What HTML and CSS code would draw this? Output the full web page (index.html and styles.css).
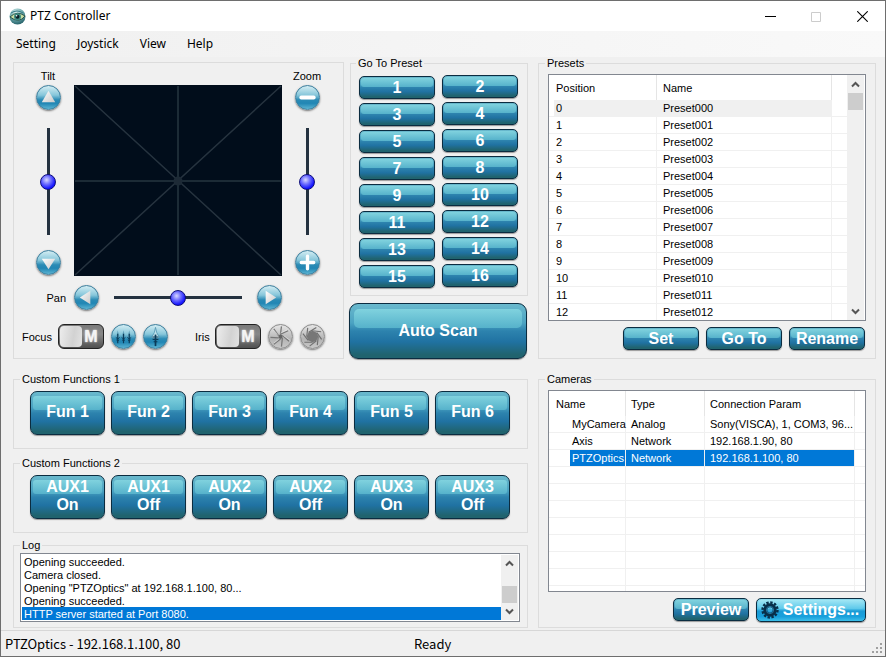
FILE: index.html
```html
<!DOCTYPE html>
<html lang="en">
<head>
<meta charset="utf-8">
<title>PTZ Controller</title>
<link rel="stylesheet" href="styles.css">
</head>
<body>
<header class="titlebar">
  <svg class="app-icon" viewBox="0 0 17 17" aria-hidden="true">
    <defs>
      <radialGradient id="globe" cx="40%" cy="25%" r="80%"><stop offset="0" stop-color="#d8f0ee"/><stop offset=".5" stop-color="#6ba9ac"/><stop offset="1" stop-color="#1f5a63"/></radialGradient>
    </defs>
    <circle cx="8.500" cy="8.500" r="8" fill="url(#globe)"/>
    <path d="M1 9Q8 2 16 8Q10 16 1 9Z" fill="#c9dfa4" stroke="#2b5148" stroke-width="1"/>
    <circle cx="8.500" cy="8.700" r="3.500" fill="#3c8b83"/>
    <circle cx="8.500" cy="8.700" r="2" fill="#0b1f25"/>
    <circle cx="7.600" cy="7.700" r=".8" fill="#fff"/>
    <path d="M2 5Q8 1 14 5" fill="none" stroke="#357a85" stroke-width="1"/>
  </svg>
  <h1 class="app-title">PTZ Controller</h1>
  <div class="window-controls">
    <button type="button" aria-label="Minimize"><svg viewBox="0 0 11 11"><path d="M0 5.500H11" stroke="#000"/></svg></button>
    <button type="button" aria-label="Maximize"><svg viewBox="0 0 11 11"><path d="M.5 1.500H9.500V10.500H.5Z" fill="none" stroke="#ccc"/></svg></button>
    <button type="button" aria-label="Close"><svg viewBox="0 0 11 11"><path d="M.3.3L10.700 10.700M10.700.3L.3 10.700" stroke="#000" stroke-width="1.100"/></svg></button>
  </div>
</header>
<nav class="menubar">
  <button type="button">Setting</button>
  <button type="button">Joystick</button>
  <button type="button">View</button>
  <button type="button">Help</button>
</nav>

<main class="workspace">
  <div class="left">
    <div class="top-row">
      <section class="ptz" aria-label="Camera movement">
        <div class="ptz-grid">
          <div class="axis">
            <label for="tilt">Tilt</label>
            <button type="button" class="round" aria-label="Tilt up"><svg viewBox="0 0 24 24"><path d="M12 5L19 17H5Z" fill="url(#metal)"/></svg></button>
            <input id="tilt" class="vertical" type="range" min="0" max="100" value="50">
            <button type="button" class="round" aria-label="Tilt down"><svg viewBox="0 0 24 24"><path d="M12 19L5 8H19Z" fill="url(#metal)"/></svg></button>
          </div>
          <svg class="pad" viewBox="0 0 208 191" preserveAspectRatio="none" role="img" aria-label="Pan and tilt pad">
            <defs>
              <linearGradient id="metal" x1="0" y1="0" x2="1" y2="1"><stop offset="0" stop-color="#fff"/><stop offset="1" stop-color="#c9c9c9"/></linearGradient>
            </defs>
            <rect width="208" height="191" fill="#010d1b"/>
            <g stroke="#26333f" stroke-width="1.500">
              <path d="M1 1L207 190M207 1L1 190"/>
              <path d="M104 1V190M1 96H207" stroke="#1c2b36" stroke-width="2"/>
            </g>
            <circle cx="104" cy="96" r="4.500" fill="#1d2a36"/>
          </svg>
          <div class="axis">
            <label for="zoom">Zoom</label>
            <button type="button" class="round" aria-label="Zoom out"><svg viewBox="0 0 24 24"><path d="M5.500 12H18.500" stroke="#fff" stroke-width="4" stroke-linecap="round"/></svg></button>
            <input id="zoom" class="vertical" type="range" min="0" max="100" value="50">
            <button type="button" class="round" aria-label="Zoom in"><svg viewBox="0 0 24 24"><path d="M5.500 12H18.500M12 5.500V18.500" stroke="#fff" stroke-width="3.500" stroke-linecap="round"/></svg></button>
          </div>
          <label class="pan-label" for="pan">Pan</label>
          <div class="pan">
            <button type="button" class="round" aria-label="Pan left"><svg viewBox="0 0 24 24"><path d="M5 12L16 5V19Z" fill="url(#metal)"/></svg></button>
            <input id="pan" type="range" min="0" max="100" value="50">
            <button type="button" class="round" aria-label="Pan right"><svg viewBox="0 0 24 24"><path d="M19 12L8 5V19Z" fill="url(#metal)"/></svg></button>
          </div>
        </div>
        <div class="lens">
          <div class="lens-group focus">
            <label for="focus-mode">Focus</label>
            <button type="button" id="focus-mode" class="toggle">M</button>
            <button type="button" class="round" aria-label="Focus far"><svg viewBox="0 0 24 24"><path d="M6 5.500L7.500 12H4.500ZM12 5.500L13.500 12H10.500ZM18 5.500L19.500 12H16.500Z" fill="#5f9fba"/><path d="M6 9V19M12 9V19M18 9V19" stroke="#0b3b58" stroke-width="1.200"/><path d="M4 13L6 14.500L8 13M10 13L12 14.500L14 13M16 13L18 14.500L20 13M4.500 15.500L6 16.500L7.500 15.500M10.500 15.500L12 16.500L13.500 15.500M16.500 15.500L18 16.500L19.500 15.500" fill="none" stroke="#0b3b58"/></svg></button>
            <button type="button" class="round" aria-label="Focus near"><svg viewBox="0 0 24 24"><path d="M12 2.500Q12.500 8 16 13L12 14.500L8 13Q11.500 8 12 2.500Z" fill="#bfe2ec" stroke="#4f93af" stroke-width=".8"/><path d="M12 10V22" stroke="#0b3b58" stroke-width="1.800"/><path d="M9 12.500H15M9 15H15M10 17.500H14" stroke="#0b3b58" stroke-width="1.200" fill="none"/></svg></button>
          </div>
          <div class="lens-group iris">
            <label for="iris-mode">Iris</label>
            <button type="button" id="iris-mode" class="toggle">M</button>
            <button type="button" class="round gray" aria-label="Close iris"><svg viewBox="0 0 24 24"><path d="M12 9.500L14 11L14 13.500L12 14.500L10 13.500L10 11Z" fill="#666"/><path d="M12 9.500L20 6M14 11L21 17M14 13.500L13 22.500M12 14.500L5 20M10 13.500L1.500 13M10 11L5 4M12 9.500L13 1.500" stroke="#777" stroke-width="1.300"/><path d="M12 8.500L19 5M15 11L22 16M10 15L5 19M9 10L4.500 5" stroke="#eee" stroke-width=".6"/></svg></button>
            <button type="button" class="round gray" aria-label="Open iris"><svg viewBox="0 0 24 24"><path d="M12 6L16.500 8L18 12L16 16.500L12 18L7.500 16L6 12L8 7.500Z" fill="#777"/><path d="M8 7.500L16 2.500M12 6L21 7M16.500 8L21.500 15M18 12L17 21M16 16.500L9 22M12 18L3.500 18M7.500 16L2 9M6 12L7 3" stroke="#707070" stroke-width="1.200"/></svg></button>
          </div>
        </div>
      </section>

      <div class="preset-column">
        <fieldset class="goto">
          <legend>Go To Preset</legend>
          <div class="goto-columns">
            <div class="goto-stack odd">
              <button type="button" class="glossy">1</button>
              <button type="button" class="glossy">3</button>
              <button type="button" class="glossy">5</button>
              <button type="button" class="glossy">7</button>
              <button type="button" class="glossy">9</button>
              <button type="button" class="glossy">11</button>
              <button type="button" class="glossy">13</button>
              <button type="button" class="glossy">15</button>
            </div>
            <div class="goto-stack">
              <button type="button" class="glossy">2</button>
              <button type="button" class="glossy">4</button>
              <button type="button" class="glossy">6</button>
              <button type="button" class="glossy">8</button>
              <button type="button" class="glossy">10</button>
              <button type="button" class="glossy">12</button>
              <button type="button" class="glossy">14</button>
              <button type="button" class="glossy">16</button>
            </div>
          </div>
        </fieldset>
        <button type="button" class="glossy scan">Auto Scan</button>
      </div>
    </div>

    <fieldset class="functions">
      <legend>Custom Functions 1</legend>
      <div class="function-row">
        <button type="button" class="glossy large">Fun 1</button>
        <button type="button" class="glossy large">Fun 2</button>
        <button type="button" class="glossy large">Fun 3</button>
        <button type="button" class="glossy large">Fun 4</button>
        <button type="button" class="glossy large">Fun 5</button>
        <button type="button" class="glossy large">Fun 6</button>
      </div>
    </fieldset>

    <fieldset class="functions">
      <legend>Custom Functions 2</legend>
      <div class="function-row">
        <button type="button" class="glossy large">AUX1<br>On</button>
        <button type="button" class="glossy large">AUX1<br>Off</button>
        <button type="button" class="glossy large">AUX2<br>On</button>
        <button type="button" class="glossy large">AUX2<br>Off</button>
        <button type="button" class="glossy large">AUX3<br>On</button>
        <button type="button" class="glossy large">AUX3<br>Off</button>
      </div>
    </fieldset>

    <fieldset class="log">
      <legend>Log</legend>
      <div class="listbox log-box">
        <ul class="log-lines">
          <li>Opening succeeded.</li>
          <li>Camera closed.</li>
          <li>Opening "PTZOptics" at 192.168.1.100, 80...</li>
          <li>Opening succeeded.</li>
          <li class="selected">HTTP server started at Port 8080.</li>
        </ul>
        <div class="scrollbar at-end">
          <button type="button" aria-label="Scroll up"><svg viewBox="0 0 9 7"><path d="M1 5.500L4.500 2L8 5.500" /></svg></button>
          <span class="thumb"></span>
          <button type="button" aria-label="Scroll down"><svg viewBox="0 0 9 7"><path d="M1 1.500L4.500 5L8 1.500"/></svg></button>
        </div>
      </div>
    </fieldset>
  </div>

  <div class="right">
    <fieldset class="presets">
      <legend>Presets</legend>
      <div class="listbox presets-box">
        <table>
          <colgroup><col class="c-position"><col><col class="c-rest"></colgroup>
          <thead><tr><th>Position</th><th>Name</th><th></th></tr></thead>
          <tbody>
            <tr class="inactive"><td>0</td><td>Preset000</td><td></td></tr>
            <tr><td>1</td><td>Preset001</td><td></td></tr>
            <tr><td>2</td><td>Preset002</td><td></td></tr>
            <tr><td>3</td><td>Preset003</td><td></td></tr>
            <tr><td>4</td><td>Preset004</td><td></td></tr>
            <tr><td>5</td><td>Preset005</td><td></td></tr>
            <tr><td>6</td><td>Preset006</td><td></td></tr>
            <tr><td>7</td><td>Preset007</td><td></td></tr>
            <tr><td>8</td><td>Preset008</td><td></td></tr>
            <tr><td>9</td><td>Preset009</td><td></td></tr>
            <tr><td>10</td><td>Preset010</td><td></td></tr>
            <tr><td>11</td><td>Preset011</td><td></td></tr>
            <tr><td>12</td><td>Preset012</td><td></td></tr>
          </tbody>
        </table>
        <div class="scrollbar">
          <button type="button" aria-label="Scroll up"><svg viewBox="0 0 9 7"><path d="M1 5.500L4.500 2L8 5.500"/></svg></button>
          <span class="thumb"></span>
          <button type="button" aria-label="Scroll down"><svg viewBox="0 0 9 7"><path d="M1 1.500L4.500 5L8 1.500"/></svg></button>
        </div>
      </div>
      <div class="actions">
        <button type="button" class="glossy">Set</button>
        <button type="button" class="glossy">Go To</button>
        <button type="button" class="glossy">Rename</button>
      </div>
    </fieldset>

    <fieldset class="cameras">
      <legend>Cameras</legend>
      <div class="listbox cameras-box">
        <table>
          <colgroup><col class="c-camera"><col class="c-type"><col><col class="c-edge"></colgroup>
          <thead><tr><th>Name</th><th>Type</th><th>Connection Param</th><th></th></tr></thead>
          <tbody>
            <tr><td>MyCamera</td><td>Analog</td><td>Sony(VISCA), 1, COM3, 96...</td><td></td></tr>
            <tr><td>Axis</td><td>Network</td><td>192.168.1.90, 80</td><td></td></tr>
            <tr class="selected"><td>PTZOptics</td><td>Network</td><td>192.168.1.100, 80</td><td></td></tr>
            <tr><td></td><td></td><td></td><td></td></tr>
            <tr><td></td><td></td><td></td><td></td></tr>
            <tr><td></td><td></td><td></td><td></td></tr>
            <tr><td></td><td></td><td></td><td></td></tr>
            <tr><td></td><td></td><td></td><td></td></tr>
            <tr><td></td><td></td><td></td><td></td></tr>
            <tr><td></td><td></td><td></td><td></td></tr>
            <tr><td></td><td></td><td></td><td></td></tr>
          </tbody>
        </table>
      </div>
      <div class="actions">
        <button type="button" class="glossy">Preview</button>
        <button type="button" class="glossy settings">
          <svg viewBox="0 0 18 18" aria-hidden="true"><circle cx="9" cy="9" r="7.500" fill="none" stroke="#082f4a" stroke-width="2.400" stroke-dasharray="2.400 1.527"/><circle cx="9" cy="9" r="4.700" fill="none" stroke="#082f4a" stroke-width="4"/><circle cx="9" cy="9" r="3.600" fill="none" stroke="#2b86b4" stroke-width=".8"/><circle cx="9" cy="9" r="1.800" fill="#3ea9d8"/></svg>
          Settings...
        </button>
      </div>
    </fieldset>
  </div>
</main>

<footer class="statusbar">
  <span class="camera-status">PTZOptics - 192.168.1.100, 80</span>
  <span>Ready</span>
  <svg class="grip" viewBox="0 0 10 10" aria-hidden="true"><path d="M8 0h2v2h-2zM4 4h2v2h-2zM8 4h2v2h-2zM0 8h2v2h-2zM4 8h2v2h-2zM8 8h2v2h-2z" fill="#a0a0a0"/></svg>
</footer>
</body>
</html>
```
FILE: styles.css
```css
* { box-sizing: border-box; }

body {
  margin: 0;
  min-height: 100vh;
  display: flex;
  flex-direction: column;
  border: 1px solid #6e6e6e;
  background: #f0f0f0;
  color: #000;
  font: 11px/12px "Liberation Sans", Arial, sans-serif;
}

button {
  margin: 0;
  padding: 0;
  border: 0;
  background: none;
  color: inherit;
  font: inherit;
}

/* Window chrome */
.titlebar {
  display: flex;
  align-items: center;
  height: 30px;
  padding-left: 8px;
  background: #fff;
}
.app-icon { width: 17px; height: 17px; }
.app-title {
  flex: 1;
  margin: 0 0 0 4px;
  font: 12px/18px "Noto Sans", "Open Sans", sans-serif;
}
.window-controls { display: flex; align-self: stretch; }
.window-controls button {
  display: grid;
  place-items: center;
  width: 46px;
}
.window-controls svg { width: 11px; height: 11px; }

.menubar {
  display: flex;
  gap: 21px;
  height: 26px;
  padding-left: 15px;
  background: linear-gradient(90deg, #f0f0f0, #f9f9f9);
  font: 12px/26px "Noto Sans", "Open Sans", sans-serif;
}

/* Overall layout */
.workspace {
  flex: 1;
  display: grid;
  grid-template-columns: 515fr 338fr;
  gap: 10px;
  padding: 0 9px 2px 12px;
}
.left, .right { display: flex; flex-direction: column; min-width: 0; }
.right { gap: 14px; }

fieldset {
  min-width: 0;
  margin: 0;
  border: 1px solid #dcdcdc;
}
legend { padding: 0 2px; line-height: 12px; }

.top-row {
  display: flex;
  gap: 5px;
  margin-bottom: 14px;
}

/* Pan, tilt, zoom panel */
.ptz {
  flex: 1;
  margin-top: 5px;
  padding: 0 11px 0 8px;
  border: 1px solid #dcdcdc;
}
.ptz-grid {
  display: grid;
  grid-template-columns: 52px 1fr 50px;
  row-gap: 9px;
}
.axis {
  display: flex;
  flex-direction: column;
  align-items: center;
  padding-top: 7px;
}
.axis label { margin-bottom: 3px; }
.pad {
  width: 100%;
  height: 191px;
  margin-top: 22px;
}
.pan-label { align-self: center; padding-right: 8px; text-align: right; }
.pan {
  display: flex;
  align-items: center;
  justify-content: space-between;
}

.round {
  flex: none;
  width: 25px;
  height: 25px;
  border: 1px solid #3a7d9c;
  border-radius: 50%;
  background: linear-gradient(#d3edf3, #86c6da 40%, #2b8bb5 60%, #2186b4 75%, #5cb4d2);
  box-shadow: 0 1px 2px #777;
}
.round svg { display: block; width: 100%; height: 100%; }
.round.gray {
  border-color: #8a8a8a;
  background: linear-gradient(#e6e6e6, #b4b4b4 60%, #c8c8c8);
}

input[type="range"] {
  appearance: none;
  width: 128px;
  height: 16px;
  margin: 0;
  background: linear-gradient(#243240, #243240) center / 100% 3px no-repeat;
}
input[type="range"]::-webkit-slider-thumb {
  appearance: none;
  width: 16px;
  height: 16px;
  border: 1px solid #10107c;
  border-radius: 50%;
  background: radial-gradient(circle at 40% 35%, #d8d8ff, #7070ff 35%, #1414ff 70%);
}
input[type="range"].vertical {
  writing-mode: vertical-lr;
  width: 16px;
  height: 107px;
  margin: 18px 0 15px;
  background-size: 3px 100%;
}

.lens {
  display: flex;
  gap: 27px;
  margin-top: 14px;
}
.lens-group { display: flex; align-items: center; gap: 7px; }
.lens-group label { margin-right: -7px; }
.focus label { width: 36px; }
.iris label { width: 20px; }
.toggle {
  position: relative;
  isolation: isolate;
  width: 46px;
  height: 25px;
  padding-left: 20px;
  border: 1px solid #222;
  border-radius: 6px;
  background: linear-gradient(#7a7a7a, #888 40%, #505050);
  color: #f4f4f4;
  font: bold 16px/22px "Liberation Sans", Arial, sans-serif;
  text-shadow: 0 0 2px #fff;
}
.toggle::before {
  content: "";
  position: absolute;
  z-index: -1;
  inset: 1px 21px 1px 1px;
  border-radius: 4px;
  background: linear-gradient(100deg, #ededed, #d2d2d2 60%, #e2e2e2);
}

/* Glossy action buttons */
.glossy {
  position: relative;
  isolation: isolate;
  width: 76px;
  height: 23px;
  border: 1px solid #0b2c40;
  border-radius: 5px;
  background: linear-gradient(#6ab9cd, #4ba3c2 35%, #2d83ae 50%, #2072a2 70%, #20636e 94%);
  box-shadow: 0 1px 1px #999;
  color: #fff;
  font: bold 16px/18px "Liberation Sans", Arial, sans-serif;
  white-space: nowrap;
}
.glossy::before {
  content: "";
  position: absolute;
  z-index: -1;
  inset: 1px 1px 54%;
  border-radius: 3px;
  background: linear-gradient(#80d2de, #56b2cb);
}
.large, .scan { border-radius: 7px; }
.large::before { inset: 4px 2px 56%; }
.large { width: auto; height: 44px; padding-bottom: 2px; }

.preset-column {
  display: flex;
  flex-direction: column;
  gap: 7px;
  width: 179px;
}
.goto { margin-left: 1px; padding: 6px 9px 7px 8px; }
.goto legend { margin-left: -3px; }
.goto-columns { display: flex; gap: 7px; }
.goto-stack {
  flex: 1;
  display: flex;
  flex-direction: column;
  gap: 4px;
}
.goto-stack.odd { padding-top: 1px; }
.goto-stack .glossy { width: 100%; }
.scan { width: 178px; height: 56px; border-radius: 9px; }
.scan::before { inset: 5px 4px 56%; border-radius: 5px; }

.functions { margin-bottom: 8px; padding: 6px 17px 13px 6px; }
.functions + .log { margin-top: -2px; }
.function-row {
  display: grid;
  grid-template-columns: repeat(6, 1fr);
  gap: 6px;
  padding-left: 10px;
}

/* List boxes */
.listbox {
  display: flex;
  overflow: hidden;
  border: 1px solid #828790;
  background: #fff;
}
.log { padding: 2px 7px 5px 6px; }
.log-box { height: 69px; padding: 1px; }
.log-lines {
  flex: 1;
  margin: 0;
  padding: 0;
  list-style: none;
  line-height: 14px;
}
.log-lines li { height: 13px; padding-left: 2px; }
.log-lines .selected { background: #0078d7; color: #fff; }

.scrollbar {
  display: flex;
  flex-direction: column;
  width: 17px;
  background: #f0f0f0;
}
.scrollbar button { display: grid; place-items: center; height: 17px; }
.scrollbar button:last-child { margin-top: auto; }
.scrollbar svg {
  width: 9px;
  height: 7px;
  fill: none;
  stroke: #555;
  stroke-width: 2;
}
.thumb { height: 17px; margin: 0 1px; background: #cdcdcd; }
.at-end .thumb { margin-top: auto; }
.scrollbar.at-end button:last-child { margin-top: 0; }

table {
  flex: 1;
  width: 100%;
  table-layout: fixed;
  border-collapse: separate;
  border-spacing: 0;
}
th, td {
  padding: 0;
  text-align: left;
  font-weight: normal;
  white-space: nowrap;
}
th { height: 25px; padding-left: 6px; border-right: 1px solid #e5e5e5; }
td {
  height: 17px;
  padding-left: 6px;
  border-right: 1px solid #f0f0f0;
  border-bottom: 1px solid #f0f0f0;
  line-height: 16px;
}
th:first-child, td:first-child { padding-left: 7px; }
th:last-child, td:last-child { border-right: 0; }

.presets { padding: 5px 9px 8px 6px; }
.presets-box { height: 247px; margin-left: 3px; padding-right: 1px; }
.presets-box .scrollbar { padding-top: 1px; }
.presets .actions { padding-right: 1px; }
.c-position { width: 108px; }
.c-rest { width: 15px; }
.inactive td { background: #f0f0f0; }
.inactive td:first-child { background: linear-gradient(90deg, #fff 5px, #f0f0f0 5px); }
.inactive td:last-child { background: #fff; }

.cameras { padding: 5px 9px 5px 6px; }
.cameras-box { height: 202px; margin-left: 3px; }
.c-camera { width: 77px; }
.c-type { width: 79px; }
.c-edge { width: 10px; }
.cameras td:first-child { padding-left: 23px; }
.cameras th:nth-child(n+2), .cameras td:nth-child(n+2) { padding-left: 5px; }
.selected td { background: #0078d7; color: #fff; }
.selected td:first-child { background: linear-gradient(90deg, #fff 21px, #0078d7 21px); }
.cameras .selected td:last-child { background: #fff; }

.actions {
  display: flex;
  justify-content: flex-end;
  gap: 7px;
  margin-top: 6px;
}
.settings {
  display: flex;
  align-items: center;
  justify-content: center;
  gap: 4px;
  width: 110px;
  height: 24px;
  padding-right: 2px;
  background: linear-gradient(#8edcf0, #4fc0e6 45%, #1a9bd6 55%, #18a0dc 80%, #3cc0ea);
}
.settings::before { background: linear-gradient(#a0e6f4, #5cc8ea); }
.settings svg { width: 18px; height: 18px; }

.statusbar {
  display: flex;
  align-items: center;
  height: 26px;
  padding: 0 3px 0 4px;
  border-top: 1px solid #d7d7d7;
  font: 13px/18px "Noto Sans CJK SC", sans-serif;
}
.camera-status { width: 409px; }
.grip { width: 10px; height: 10px; margin: auto 0 3px auto; }
```
